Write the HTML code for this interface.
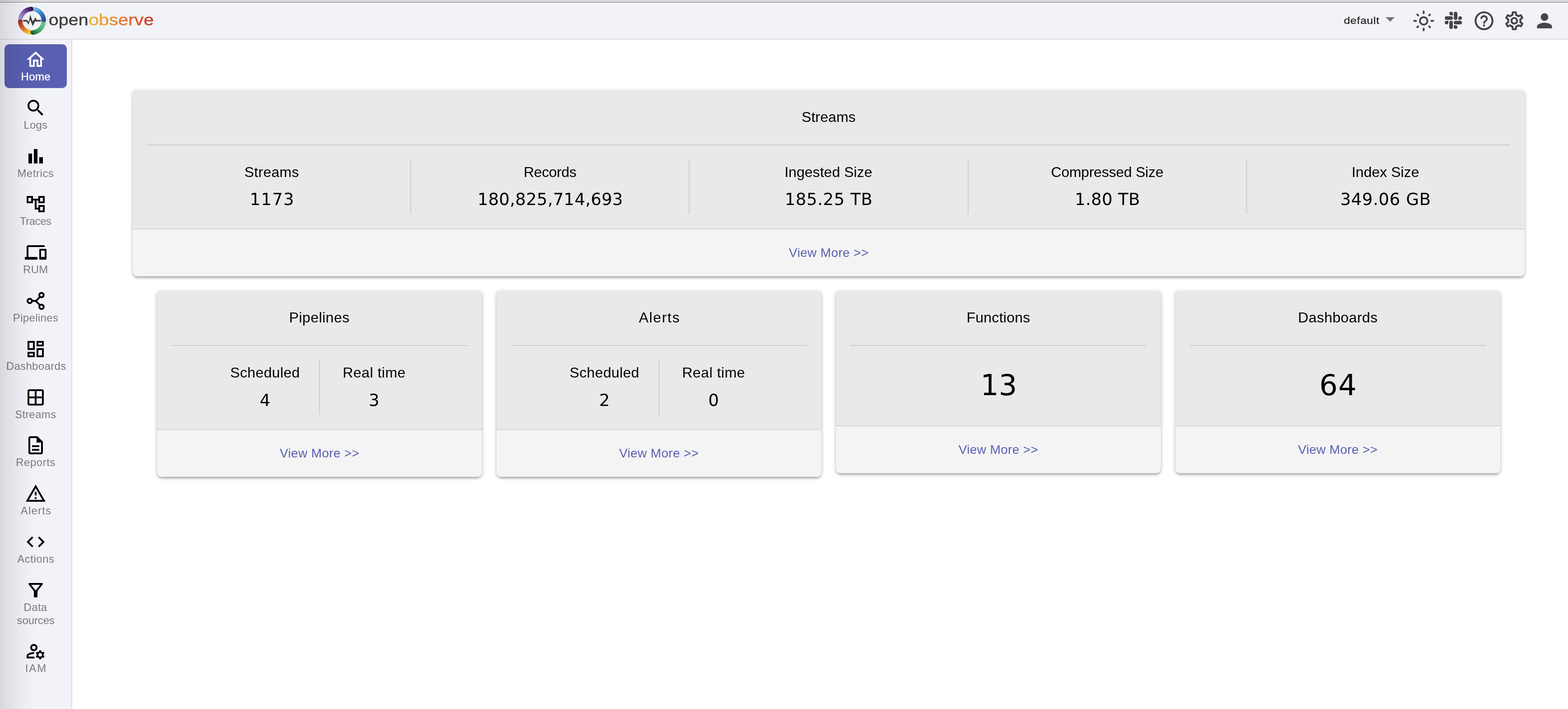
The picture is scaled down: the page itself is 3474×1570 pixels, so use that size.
<!DOCTYPE html>
<html lang="en"><head><meta charset="utf-8"><title>OpenObserve</title>
<style>
html,body{margin:0;padding:0}
body{width:3474px;height:1570px;position:relative;overflow:hidden;background:#fff;
 font-family:"Liberation Sans",sans-serif;color:#000;-webkit-font-smoothing:antialiased}
*{box-sizing:border-box}
.ic,.t,.box{position:absolute;display:block}
.t{white-space:nowrap;text-align:center;margin:0;padding:0;font-weight:400}
.chrome1{left:0;top:0;width:3474px;height:4px;background:#dcdcdc}
.chrome2{left:0;top:4px;width:3474px;height:2px;background:#adadad}
header,nav,main{will-change:transform}
header{position:absolute;left:0;top:6px;width:3474px;height:82px;background:#f2f3f8;border-bottom:2px solid #dddddd}
nav{position:absolute;left:0;top:88px;width:160px;height:1482px;background:#f2f3f8;border-right:2px solid #dddddd}
main{position:absolute;left:160px;top:88px;width:3314px;height:1482px;background:#fff}
.edge{position:absolute;left:0;top:0;width:90px;height:1570px;pointer-events:none;
 background:linear-gradient(to right,rgba(0,0,0,.11) 0,rgba(0,0,0,.062) 25px,rgba(0,0,0,.025) 50px,rgba(0,0,0,0) 80px)}
.navitem{position:absolute;left:0;width:158px;text-decoration:none}
.navitem .lbl{position:absolute;left:0;width:158px;text-align:center;font-size:24px;line-height:29px;color:#7b7b7b;white-space:nowrap}
.navitem.active .bg{position:absolute;left:10px;top:0;width:138px;height:97px;border-radius:10px;background:#5960b2}
.navitem.active .lbl{color:#fff;-webkit-text-stroke:.5px #fff}
.card{position:absolute;background:#e9e9e9;border-radius:7px 7px 11px 11px;
 box-shadow:0 2px 10px rgba(0,0,0,.2),0 4px 4px rgba(0,0,0,.14),0 6px 2px -4px rgba(0,0,0,.12)}
.card .hr{position:absolute;height:2px;background:#cdcdcd}
.card .vr{position:absolute;width:2px;background:#cdcdcd}
.card .foot{position:absolute;left:0;right:0;bottom:0;background:#f4f4f4;border-top:2px solid #d6d6d6;border-radius:0 0 11px 11px}
.card .cnr{position:absolute;top:0;width:7px;height:7px}
.card .cnr.l{left:0;background:radial-gradient(circle at 100% 100%,rgba(0,0,0,0) 6.6px,#f0f0f0 7.4px)}
.card .cnr.r{right:0;background:radial-gradient(circle at 0 100%,rgba(0,0,0,0) 6.6px,#f0f0f0 7.4px)}
.title,.lab{font-size:32px;line-height:40px}
.val,.big{font-family:"DejaVu Sans","Liberation Sans",sans-serif}
.val{font-size:37px;line-height:48px}
.big{font-size:64px;line-height:80px}
.more{font-size:28px;line-height:36px;color:#5960b2;text-decoration:none}
</style></head>
<body>
<div class="box chrome1"></div><div class="box chrome2"></div>
<header>
<svg class="ic" style="left:0;top:0;width:360px;height:80px" viewBox="0 6 360 80" role="img" aria-label="openobserve">
<defs>
<linearGradient id="gp" gradientUnits="userSpaceOnUse" x1="44.9" y1="46.9" x2="72.7" y2="20.0"><stop offset="0" stop-color="#b9abd3"/><stop offset="0.42" stop-color="#8e6cb0"/><stop offset="0.74" stop-color="#602e8b"/><stop offset="1" stop-color="#35155a"/></linearGradient>
<linearGradient id="gb" gradientUnits="userSpaceOnUse" x1="69.9" y1="20.0" x2="96.8" y2="47.8"><stop offset="0" stop-color="#8fcbe6"/><stop offset="0.35" stop-color="#4f9fd2"/><stop offset="0.7" stop-color="#2a6fb3"/><stop offset="1" stop-color="#36458c"/></linearGradient>
<linearGradient id="gg" gradientUnits="userSpaceOnUse" x1="96.8" y1="45.0" x2="69.0" y2="71.9"><stop offset="0" stop-color="#76c897"/><stop offset="0.4" stop-color="#5cb87c"/><stop offset="0.75" stop-color="#38935a"/><stop offset="1" stop-color="#175a31"/></linearGradient>
<linearGradient id="gr" gradientUnits="userSpaceOnUse" x1="71.8" y1="71.9" x2="44.9" y2="44.1"><stop offset="0" stop-color="#f8df3e"/><stop offset="0.3" stop-color="#eba53a"/><stop offset="0.62" stop-color="#dd5a2d"/><stop offset="1" stop-color="#9e2f27"/></linearGradient>
<linearGradient id="gt" gradientUnits="userSpaceOnUse" x1="197" y1="0" x2="340" y2="0"><stop offset="0" stop-color="#f0b736"/><stop offset=".28" stop-color="#eb9a34"/><stop offset=".55" stop-color="#e6702f"/><stop offset=".8" stop-color="#dc4d2c"/><stop offset="1" stop-color="#b93a25"/></linearGradient>
</defs>
<g fill="none" stroke-width="10.0"><path d="M44.87 46.86A26.0 26.0 0 0 1 69.04 20.01" stroke="url(#gp)"/><path d="M69.94 19.97A26.0 26.0 0 0 1 96.79 44.14" stroke="url(#gb)"/><path d="M96.83 45.04A26.0 26.0 0 0 1 72.66 71.89" stroke="url(#gg)"/><path d="M71.76 71.93A26.0 26.0 0 0 1 44.91 47.76" stroke="url(#gr)"/></g>
<circle cx="69.04" cy="20.01" r="5.0" fill="url(#gp)"/><circle cx="96.79" cy="44.14" r="5.0" fill="url(#gb)"/><circle cx="72.66" cy="71.89" r="5.0" fill="url(#gg)"/><circle cx="44.91" cy="47.76" r="5.0" fill="url(#gr)"/>
<path d="M51.2 44.3H60.4L63.5 49.2 66.75 32.3 72.5 47.4 78.5 38.8 81.6 44.3H90.7V47.7H79.8L78.3 46.6 72.5 57.9 66.9 43.6 63.2 54.8 58.9 47.7H51.2Z" fill="#3f3f3f"/>
<rect x="104.6" y="36" width="1.3" height="20" fill="#d6d6da"/>
<text x="107.8" y="55.8" font-family="Liberation Sans, sans-serif" font-size="35" fill="#3e3e3e" stroke="#3e3e3e" stroke-width="0.5" textLength="87.8" lengthAdjust="spacingAndGlyphs">open</text>
<text x="196.2" y="55.8" font-family="Liberation Sans, sans-serif" font-size="35" fill="url(#gt)" stroke="url(#gt)" stroke-width="0.5" textLength="144.6" lengthAdjust="spacingAndGlyphs">observe</text>
</svg>
<div class="t" style="left:2970.00px;width:94px;top:24.5px;font-size:22px;line-height:30px;letter-spacing:0.67px;color:#1c1c1c;-webkit-text-stroke:.25px #1c1c1c;transform:scaleX(1.12)">default</div>
<svg class="ic" style="left:3056px;top:12px;width:48px;height:48px" viewBox="0 0 24 24" fill="#707070" aria-hidden="true"><path d="M7 10l5 5 5-5z"/></svg>
<svg class="ic" style="left:3130px;top:16px;width:48px;height:48px" viewBox="0 0 48 48" fill="none" stroke="#454547" stroke-width="4" stroke-linecap="round" aria-hidden="true"><circle cx="24.2" cy="24.2" r="8.3"/><path d="M24.2 3.2v4M24.2 41.2v4M3.2 24.2h4M41.2 24.2h4M10.1 10.1l2 2M36.3 36.3l2 2M10.1 38.3l2-2M36.3 12.1l2-2"/></svg>
<svg class="ic" style="left:3201px;top:20px;width:38px;height:38px" viewBox="0 0 24 24" fill="#454547" aria-hidden="true"><path d="M5.042 15.165a2.528 2.528 0 0 1-2.52 2.523A2.528 2.528 0 0 1 0 15.165a2.527 2.527 0 0 1 2.522-2.52h2.52v2.52zM6.313 15.165a2.527 2.527 0 0 1 2.521-2.52 2.527 2.527 0 0 1 2.521 2.52v6.313A2.528 2.528 0 0 1 8.834 24a2.528 2.528 0 0 1-2.521-2.522v-6.313zM8.834 5.042a2.528 2.528 0 0 1-2.521-2.52A2.528 2.528 0 0 1 8.834 0a2.528 2.528 0 0 1 2.521 2.522v2.52H8.834zM8.834 6.313a2.528 2.528 0 0 1 2.521 2.521 2.528 2.528 0 0 1-2.521 2.521H2.522A2.528 2.528 0 0 1 0 8.834a2.528 2.528 0 0 1 2.522-2.521h6.312zM18.956 8.834a2.528 2.528 0 0 1 2.522-2.521A2.528 2.528 0 0 1 24 8.834a2.528 2.528 0 0 1-2.522 2.521h-2.522V8.834zM17.688 8.834a2.528 2.528 0 0 1-2.523 2.521 2.527 2.527 0 0 1-2.52-2.521V2.522A2.527 2.527 0 0 1 15.165 0a2.528 2.528 0 0 1 2.523 2.522v6.312zM15.165 18.956a2.528 2.528 0 0 1 2.523 2.522A2.528 2.528 0 0 1 15.165 24a2.527 2.527 0 0 1-2.52-2.522v-2.522h2.52zM15.165 17.688a2.527 2.527 0 0 1-2.52-2.523 2.526 2.526 0 0 1 2.520-2.520h6.313A2.527 2.527 0 0 1 24 15.165a2.528 2.528 0 0 1-2.522 2.523h-6.313z"/></svg>
<svg class="ic" style="left:3263px;top:14.8px;width:50px;height:50px" viewBox="0 0 24 24" fill="#454547" aria-hidden="true"><path d="M11 18h2v-2h-2v2zm1-16C6.48 2 2 6.48 2 12s4.48 10 10 10 10-4.48 10-10S17.52 2 12 2zm0 18c-4.41 0-8-3.59-8-8s3.59-8 8-8 8 3.59 8 8-3.59 8-8 8zm0-14c-2.21 0-4 1.79-4 4h2c0-1.1.9-2 2-2s2 .9 2 2c0 2-3 1.75-3 5h2c0-2.25 3-2.5 3-5 0-2.21-1.79-4-4-4z"/></svg>
<svg class="ic" style="left:3330.2px;top:15px;width:50px;height:50px" viewBox="0 0 24 24" fill="#454547" aria-hidden="true"><path d="M19.43 12.98c.04-.32.07-.64.07-.98 0-.34-.03-.66-.07-.98l2.11-1.65c.19-.15.24-.42.12-.64l-2-3.46c-.09-.16-.26-.25-.44-.25-.06 0-.12.01-.17.03l-2.49 1c-.52-.4-1.08-.73-1.69-.98l-.38-2.65C14.46 2.18 14.25 2 14 2h-4c-.25 0-.46.18-.49.42l-.38 2.65c-.61.25-1.17.59-1.69.98l-2.49-1c-.06-.02-.12-.03-.18-.03-.17 0-.34.09-.43.25l-2 3.46c-.13.22-.07.49.12.64l2.11 1.65c-.04.32-.07.65-.07.98 0 .33.03.66.07.98l-2.11 1.65c-.19.15-.24.42-.12.64l2 3.46c.09.16.26.25.44.25.06 0 .12-.01.17-.03l2.49-1c.52.4 1.08.73 1.69.98l.38 2.65c.03.24.24.42.49.42h4c.25 0 .46-.18.49-.42l.38-2.65c.61-.25 1.17-.59 1.69-.98l2.49 1c.06.02.12.03.18.03.17 0 .34-.09.43-.25l2-3.46c.12-.22.07-.49-.12-.64l-2.11-1.65zm-1.98-1.71c.04.31.05.52.05.73 0 .21-.02.43-.05.73l-.14 1.13.89.7 1.08.84-.7 1.21-1.27-.51-1.04-.42-.9.68c-.43.32-.84.56-1.25.73l-1.06.43-.16 1.13-.2 1.35h-1.4l-.19-1.35-.16-1.13-1.06-.43c-.43-.18-.83-.41-1.23-.71l-.91-.7-1.06.43-1.27.51-.7-1.21 1.08-.84.89-.7-.14-1.13c-.03-.31-.05-.54-.05-.74s.02-.43.05-.73l.14-1.13-.89-.7-1.08-.84.7-1.21 1.27.51 1.04.42.9-.68c.43-.32.84-.56 1.25-.73l1.06-.43.16-1.13.2-1.35h1.39l.19 1.35.16 1.13 1.06.43c.43.18.83.41 1.23.71l.91.7 1.06-.43 1.27-.51.7 1.21-1.07.85-.89.7.14 1.13zM12 8c-2.21 0-4 1.79-4 4s1.79 4 4 4 4-1.79 4-4-1.79-4-4-4zm0 6c-1.1 0-2-.9-2-2s.9-2 2-2 2 .9 2 2-.9 2-2 2z"/></svg>
<svg class="ic" style="left:3397px;top:15px;width:50px;height:50px" viewBox="0 0 24 24" fill="#454547" aria-hidden="true"><path d="M12 12c2.21 0 4-1.79 4-4s-1.79-4-4-4-4 1.79-4 4 1.79 4 4 4zm0 2c-2.67 0-8 1.34-8 4v2h16v-2c0-2.66-5.33-4-8-4z"/></svg>
</header>
<nav>
<a class="navitem active" style="top:10px;height:97px"><span class="bg"></span><svg class="ic" style="left:55px;top:10px;width:48px;height:48px" viewBox="0 0 24 24" fill="#fff" aria-hidden="true"><path d="M12 5.69l5 4.5V18h-2v-6H9v6H7v-7.81l5-4.5M12 3L2 12h3v8h6v-6h2v6h6v-8h3L12 3z"/></svg><span class="lbl" style="left:0.24px;top:57.18px;letter-spacing:0.37px;">Home</span></a>
<a class="navitem" style="top:117px;height:97px"><svg class="ic" style="left:55px;top:10px;width:48px;height:48px" viewBox="0 0 24 24" fill="#000" aria-hidden="true"><path d="M15.5 14h-.79l-.28-.27C15.41 12.59 16 11.11 16 9.5 16 5.91 13.09 3 9.5 3S3 5.91 3 9.5 5.91 16 9.5 16c1.61 0 3.09-.59 4.23-1.57l.27.28v.79l5 4.99L20.49 19l-4.99-5zm-6 0C7.01 14 5 11.99 5 9.5S7.01 5 9.5 5 14 7.01 14 9.5 11.99 14 9.5 14z"/></svg><span class="lbl" style="left:-0.26px;top:57.18px;letter-spacing:0.17px;">Logs</span></a>
<a class="navitem" style="top:224px;height:97px"><svg class="ic" style="left:55px;top:10px;width:48px;height:48px" viewBox="0 0 24 24" fill="#000" aria-hidden="true"><path d="M4 9h4v11H4zM16 13h4v7h-4zM10 4h4v16h-4z"/></svg><span class="lbl" style="left:0.02px;top:57.18px;letter-spacing:0.51px;">Metrics</span></a>
<a class="navitem" style="top:330px;height:97px"><svg class="ic" style="left:55px;top:10px;width:48px;height:48px" viewBox="0 0 24 24" fill="#000" aria-hidden="true"><path d="M22 11V3h-7v3H9V3H2v8h7V8h2v10h4v3h7v-8h-7v3h-2V8h2v3h7zM7 9H4V5h3v4zm10 6h3v4h-3v-4zm0-10h3v4h-3V5z"/></svg><span class="lbl" style="left:-0.24px;top:57.18px;letter-spacing:-0.50px;">Traces</span></a>
<a class="navitem" style="top:437px;height:97px"><svg class="ic" style="left:55px;top:10px;width:48px;height:48px" viewBox="0 0 24 24" fill="#000" aria-hidden="true"><path d="M4 6h18V4H4c-1.1 0-2 .9-2 2v11H0v3h14v-3H4V6zm19 2h-6c-.55 0-1 .45-1 1v10c0 .55.45 1 1 1h6c.55 0 1-.45 1-1V9c0-.55-.45-1-1-1zm-1 9h-4v-7h4v7z"/></svg><span class="lbl" style="left:-0.22px;top:57.18px;letter-spacing:0.22px;">RUM</span></a>
<a class="navitem" style="top:544px;height:97px"><svg class="ic" style="left:55px;top:10px;width:48px;height:48px" viewBox="0 0 48 48" fill="none" stroke="#000" stroke-width="4" aria-hidden="true"><path d="M15.5 24.3H25.2M33.5 15L24.6 24.6 33.4 33.7" stroke-linejoin="miter"/><circle cx="10.9" cy="24.3" r="4.85"/><circle cx="36.9" cy="11.3" r="4.85"/><circle cx="36.9" cy="37.3" r="4.85"/></svg><span class="lbl" style="left:0.02px;top:57.18px;letter-spacing:0.34px;">Pipelines</span></a>
<a class="navitem" style="top:651px;height:97px"><svg class="ic" style="left:55px;top:10px;width:48px;height:48px" viewBox="0 0 24 24" fill="#000" aria-hidden="true"><path d="M19 5v2h-4V5h4M9 5v6H5V5h4m10 8v6h-4v-6h4M9 17v2H5v-2h4M21 3h-8v6h8V3zM11 3H3v10h8V3zm10 8h-8v10h8V11zm-10 4H3v6h8v-6z"/></svg><span class="lbl" style="left:1.14px;top:57.18px;letter-spacing:0.33px;">Dashboards</span></a>
<a class="navitem" style="top:758px;height:97px"><svg class="ic" style="left:55px;top:10px;width:48px;height:48px" viewBox="0 0 24 24" fill="#000" aria-hidden="true"><path d="M19 3H5c-1.1 0-2 .9-2 2v14c0 1.1.9 2 2 2h14c1.1 0 2-.9 2-2V5c0-1.1-.9-2-2-2zm0 8h-6V5h6v6zm-8-6v6H5V5h6zm-6 8h6v6H5v-6zm8 6v-6h6v6h-6z"/></svg><span class="lbl" style="left:-0.24px;top:57.18px;letter-spacing:0.24px;">Streams</span></a>
<a class="navitem" style="top:864px;height:97px"><svg class="ic" style="left:55px;top:10px;width:48px;height:48px" viewBox="0 0 24 24" fill="#000" aria-hidden="true"><path d="M8 16h8v2H8zm0-4h8v2H8zm6-10H6c-1.1 0-2 .9-2 2v16c0 1.1.89 2 1.99 2H18c1.1 0 2-.9 2-2V8l-6-6zm4 18H6V4h7v5h5v11z"/></svg><span class="lbl" style="left:0.06px;top:57.18px;letter-spacing:0.51px;">Reports</span></a>
<a class="navitem" style="top:971px;height:97px"><svg class="ic" style="left:55px;top:10px;width:48px;height:48px" viewBox="0 0 24 24" fill="#000" aria-hidden="true"><path d="M12 5.99L19.53 19H4.47L12 5.99M12 2L1 21h22L12 2zm1 14h-2v2h2v-2zm0-6h-2v4h2v-4z"/></svg><span class="lbl" style="left:0.96px;top:57.18px;letter-spacing:1.20px;">Alerts</span></a>
<a class="navitem" style="top:1078px;height:97px"><svg class="ic" style="left:55px;top:10px;width:48px;height:48px" viewBox="0 0 24 24" fill="#000" aria-hidden="true"><path d="M9.4 16.6L4.8 12l4.6-4.6L8 6l-6 6 6 6 1.4-1.4zm5.2 0l4.6-4.6-4.6-4.6L16 6l6 6-6 6-1.4-1.4z"/></svg><span class="lbl" style="left:0.44px;top:57.18px;letter-spacing:0.51px;">Actions</span></a>
<a class="navitem" style="top:1185px;height:97px"><svg class="ic" style="left:55px;top:10px;width:48px;height:48px" viewBox="0 0 24 24" fill="#000" aria-hidden="true"><path d="M7 6h10l-5.01 6.3L7 6zm-2.750-.390C6.270 8.200 10 13 10 13v6c0 .550.450 1 1 1h2c.550 0 1-.450 1-1v-6s3.720-4.800 5.740-7.390c.510-.660.040-1.610-.790-1.610H5.040c-.830 0-1.300.950-.790 1.610z"/></svg><span class="lbl" style="left:-0.46px;top:57.18px;letter-spacing:0.31px;">Data</span><span class="lbl" style="left:0.26px;top:86.18px;letter-spacing:-0.09px;">sources</span></a>
<a class="navitem" style="top:1320px;height:97px"><svg class="ic" style="left:55px;top:10px;width:48px;height:48px" viewBox="0 0 24 24" fill="#000" aria-hidden="true"><path d="M4 18v-.65c0-.34.16-.66.41-.81C6.1 15.53 8.03 15 10 15c.03 0 .05 0 .08.01.1-.7.3-1.37.59-1.98-.22-.02-.44-.03-.67-.03-2.42 0-4.68.67-6.61 1.82-.88.52-1.39 1.5-1.39 2.53V20h9.26c-.42-.6-.75-1.28-.97-2H4zM10 12c2.21 0 4-1.79 4-4s-1.79-4-4-4-4 1.79-4 4 1.79 4 4 4zm0-6c1.1 0 2 .9 2 2s-.9 2-2 2-2-.9-2-2 .9-2 2-2zM20.750 16c0-.22-.03-.42-.06-.63l1.14-1.01-1-1.73-1.45.49c-.32-.27-.68-.48-1.08-.63L18 11h-2l-.3 1.49c-.4.15-.76.36-1.08.63l-1.45-.49-1 1.73 1.14 1.01c-.03.21-.06.41-.06.63s.03.42.06.63l-1.14 1.01 1 1.73 1.45-.49c.32.27.68.48 1.08.63L16 21h2l.3-1.49c.4-.15.76-.36 1.08-.63l1.45.49 1-1.73-1.14-1.01c.03-.21.06-.41.06-.63zM17 18c-1.1 0-2-.9-2-2s.9-2 2-2 2 .9 2 2-.9 2-2 2z"/></svg><span class="lbl" style="left:1.02px;top:57.18px;letter-spacing:1.98px;">IAM</span></a>
</nav>
<main>
<section class="card" style="left:134px;top:112px;width:3084px;height:412px">
<i class="cnr l"></i><i class="cnr r"></i>
<h2 class="t title" style="left:1241.86px;top:38.61px;width:600px;letter-spacing:0.10px;">Streams</h2>
<div class="hr" style="left:32px;right:32px;top:120px"></div>
<div class="t lab" style="left:7.98px;top:160.81px;width:600px;letter-spacing:0.29px;">Streams</div>
<div class="t val" style="left:9.00px;top:218.20px;width:600px;letter-spacing:1.20px;">1173</div>
<div class="vr" style="left:615px;top:154px;height:120px"></div>
<div class="t lab" style="left:624.56px;top:160.81px;width:600px;letter-spacing:-0.36px;">Records</div>
<div class="t val" style="left:625.20px;top:218.20px;width:600px;letter-spacing:0.32px;">180,825,714,693</div>
<div class="vr" style="left:1232px;top:154px;height:120px"></div>
<div class="t lab" style="left:1241.36px;top:160.81px;width:600px;letter-spacing:0.03px;">Ingested Size</div>
<div class="t val" style="left:1242.12px;top:218.20px;width:600px;letter-spacing:0.63px;">185.25 TB</div>
<div class="vr" style="left:1850px;top:154px;height:120px"></div>
<div class="t lab" style="left:1859.02px;top:160.81px;width:600px;letter-spacing:-0.24px;">Compressed Size</div>
<div class="t val" style="left:1859.64px;top:218.20px;width:600px;letter-spacing:0.36px;">1.80 TB</div>
<div class="vr" style="left:2467px;top:154px;height:120px"></div>
<div class="t lab" style="left:2475.52px;top:160.81px;width:600px;letter-spacing:0.02px;">Index Size</div>
<div class="t val" style="left:2475.96px;top:218.20px;width:600px;letter-spacing:0.64px;">349.06 GB</div>
<div class="foot" style="height:106px"><a class="t more" style="left:1242.28px;top:33.90px;width:600px;letter-spacing:0.38px;">View More &gt;&gt;</a></div>
</section>
<section class="card" style="left:188px;top:556px;width:720px;height:412px">
<i class="cnr l"></i><i class="cnr r"></i>
<h2 class="t title" style="left:59.56px;top:39.11px;width:600px;letter-spacing:0.48px;">Pipelines</h2>
<div class="hr" style="left:32px;right:32px;top:120px"></div>
<div class="t lab" style="left:118.28px;top:160.71px;width:242px;letter-spacing:0.37px;">Scheduled</div>
<div class="t val" style="left:118.36px;top:218.90px;width:242px;">4</div>
<div class="t lab" style="left:360.00px;top:160.71px;width:242px;letter-spacing:0.50px;">Real time</div>
<div class="t val" style="left:359.76px;top:218.90px;width:242px;">3</div>
<div class="vr" style="left:359.0px;top:154px;height:120px"></div>
<div class="foot" style="height:106px"><a class="t more" style="left:60.00px;top:34.00px;width:600px;letter-spacing:0.36px;">View More &gt;&gt;</a></div>
</section>
<section class="card" style="left:940px;top:556px;width:720px;height:412px">
<i class="cnr l"></i><i class="cnr r"></i>
<h2 class="t title" style="left:61.22px;top:39.11px;width:600px;letter-spacing:1.64px;">Alerts</h2>
<div class="hr" style="left:32px;right:32px;top:120px"></div>
<div class="t lab" style="left:118.28px;top:160.71px;width:242px;letter-spacing:0.35px;">Scheduled</div>
<div class="t val" style="left:118.36px;top:218.90px;width:242px;">2</div>
<div class="t lab" style="left:360.00px;top:160.71px;width:242px;letter-spacing:0.50px;">Real time</div>
<div class="t val" style="left:360.06px;top:218.90px;width:242px;">0</div>
<div class="vr" style="left:359.0px;top:154px;height:120px"></div>
<div class="foot" style="height:106px"><a class="t more" style="left:60.00px;top:34.00px;width:600px;letter-spacing:0.36px;">View More &gt;&gt;</a></div>
</section>
<section class="card" style="left:1692px;top:556px;width:720px;height:404px">
<i class="cnr l"></i><i class="cnr r"></i>
<h2 class="t title" style="left:60.02px;top:39.11px;width:600px;letter-spacing:0.28px;">Functions</h2>
<div class="hr" style="left:32px;right:32px;top:120px"></div>
<div class="t big" style="left:60.84px;top:168.86px;width:600px;letter-spacing:-0.24px;">13</div>
<div class="foot" style="height:106px"><a class="t more" style="left:60.00px;top:34.00px;width:600px;letter-spacing:0.36px;">View More &gt;&gt;</a></div>
</section>
<section class="card" style="left:2444px;top:556px;width:720px;height:404px">
<i class="cnr l"></i><i class="cnr r"></i>
<h2 class="t title" style="left:60.14px;top:39.11px;width:600px;letter-spacing:0.41px;">Dashboards</h2>
<div class="hr" style="left:32px;right:32px;top:120px"></div>
<div class="t big" style="left:61.08px;top:168.86px;width:600px;letter-spacing:1.44px;">64</div>
<div class="foot" style="height:106px"><a class="t more" style="left:60.00px;top:34.00px;width:600px;letter-spacing:0.36px;">View More &gt;&gt;</a></div>
</section>
</main>
<div class="edge"></div>
</body></html>
